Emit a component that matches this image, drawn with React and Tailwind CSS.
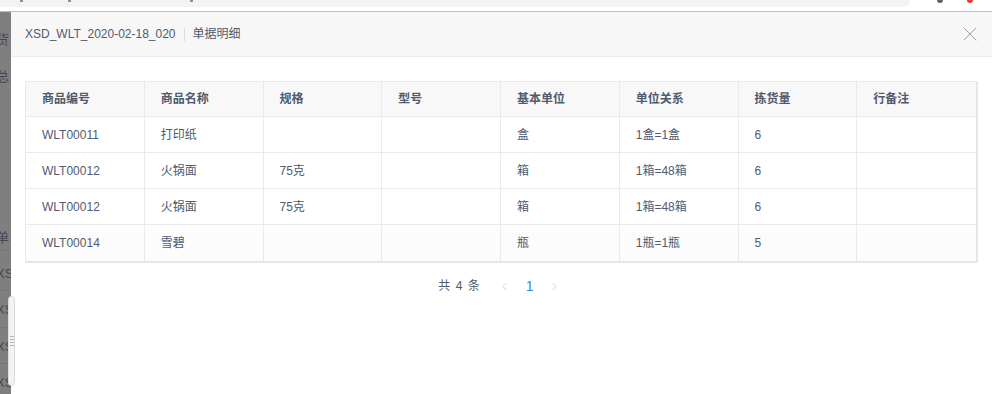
import { X, ChevronLeft, ChevronRight } from 'lucide-react'

const columns = ['商品编号', '商品名称', '规格', '型号', '基本单位', '单位关系', '拣货量', '行备注']

const rows = [
  ['WLT00011', '打印纸', '', '', '盒', '1盒=1盒', '6', ''],
  ['WLT00012', '火锅面', '75克', '', '箱', '1箱=48箱', '6', ''],
  ['WLT00012', '火锅面', '75克', '', '箱', '1箱=48箱', '6', ''],
  ['WLT00014', '雪碧', '', '', '瓶', '1瓶=1瓶', '5', ''],
]

const font = { fontFamily: '"Liberation Sans", "Noto Sans CJK SC", sans-serif' }

function BackdropStrip() {
  const bits = [
    ['货', 'top-[18px]'],
    ['总', 'top-[55px]'],
    ['单', 'top-[216px]'],
    ['XS', 'top-[252px]'],
    ['XS', 'top-[288px]'],
    ['XS', 'top-[325px]'],
    ['XS', 'top-[361px]'],
  ]
  return (
    <div className="relative w-[11px] shrink-0 overflow-hidden bg-[#7f7f7f]">
      {bits.map(([t, top], i) => (
        <span key={i} className={`absolute -left-[4px] ${top} text-[13px] text-[#333a48] opacity-80`}>{t}</span>
      ))}
      <div className="absolute top-[238px] left-0 w-full h-px bg-[#757575]" />
      <div className="absolute top-[278px] left-0 w-full h-px bg-[#757575]" />
      <div className="absolute top-[315px] left-0 w-full h-px bg-[#757575]" />
      <div className="absolute top-[351px] left-0 w-full h-px bg-[#757575]" />
    </div>
  )
}

export default function App() {
  return (
    <div className="relative w-[992px] h-[394px] overflow-hidden bg-white flex flex-col" style={font}>
      {/* browser bar remnant */}
      <div className="h-[12px] shrink-0 bg-white border-b border-[#bdbdbd] flex items-start">
        <div className="w-[910px] h-[7px] bg-[#f1f3f4] rounded-br-[10px] relative">
          <span className="absolute left-[20px] top-0 w-[3px] h-[2px] bg-[#8a8f99]" />
          <span className="absolute left-[68px] top-0 w-[3px] h-[2px] bg-[#8a8f99]" />
          <span className="absolute left-[190px] top-0 w-[3px] h-[2px] bg-[#8a8f99]" />
        </div>
        <span className="ml-[27px] w-[6px] h-[3px] bg-[#5f6368] rounded-b-full" />
        <span className="ml-[24px] w-[6px] h-[3px] bg-[#e53935] rounded-b-full" />
      </div>

      <div className="flex flex-1 min-h-0">
        <BackdropStrip />

        {/* modal */}
        <div className="flex-1 flex flex-col bg-white">
          <div className="h-[45px] shrink-0 bg-[#f7f7f7] border-b border-[#e8eaec] flex items-center pl-[14px] pr-[10px]">
            <span className="text-[12px] text-[#515a6e]">XSD_WLT_2020-02-18_020</span>
            <span className="mx-[8px] w-px h-[13px] bg-[#d7dae2]" />
            <span className="text-[12px] text-[#515a6e]">单据明细</span>
            <X className="ml-auto w-[24px] h-[24px] text-[#a0a0a0]" strokeWidth={1} />
          </div>

          <div className="pt-[24px] pl-[14px] pr-[14px]">
            <div className="w-[953px] border-l border-t border-[#e8eaec] border-r-2 border-r-[#e4e6ea] border-b-2 border-b-[#e4e6ea]">
              <div className="grid grid-cols-8 bg-[#f8f8f9] h-[35px] border-b border-[#e8eaec]">
                {columns.map((c, i) => (
                  <div key={i} className="flex items-center pl-[16px] text-[12px] font-semibold text-[#515a6e] border-r border-[#e8eaec] last:border-r-0">
                    {c}
                  </div>
                ))}
              </div>
              {rows.map((r, ri) => (
                <div
                  key={ri}
                  className={`grid grid-cols-8 h-[36px] ${ri < rows.length - 1 ? 'border-b border-[#e8eaec] bg-white' : 'bg-[#fcfcfc]'}`}
                >
                  {r.map((v, ci) => (
                    <div key={ci} className="flex items-center pl-[16px] text-[12px] text-[#515a6e] border-r border-[#e8eaec] last:border-r-0">
                      {v}
                    </div>
                  ))}
                </div>
              ))}
            </div>

            <div className="flex items-center justify-center mt-[13px] h-[20px] pr-[4px] text-[12px] text-[#515a6e]">
              <span className="mr-[17px] tracking-[1px]">共 4 条</span>
              <ChevronLeft className="w-[13px] h-[13px] text-[#c5c8ce]" strokeWidth={1.6} />
              <span className="mx-[15px] w-[7px] text-center text-[#2d8cf0] text-[14px]">1</span>
              <ChevronRight className="w-[13px] h-[13px] text-[#c5c8ce]" strokeWidth={1.6} />
            </div>
          </div>
        </div>
      </div>

      {/* backdrop page scrollbar */}
      <div className="absolute left-[8px] top-[296px] w-[7px] h-[90px] rounded-[4px] bg-[#f3f3f3] border border-[#dcdcdc] flex flex-col items-center justify-center gap-[2px]">
        <span className="w-[4px] h-px bg-[#b5b5b5]" />
        <span className="w-[4px] h-px bg-[#b5b5b5]" />
        <span className="w-[4px] h-px bg-[#b5b5b5]" />
        <span className="w-[4px] h-px bg-[#b5b5b5]" />
      </div>
    </div>
  )
}
